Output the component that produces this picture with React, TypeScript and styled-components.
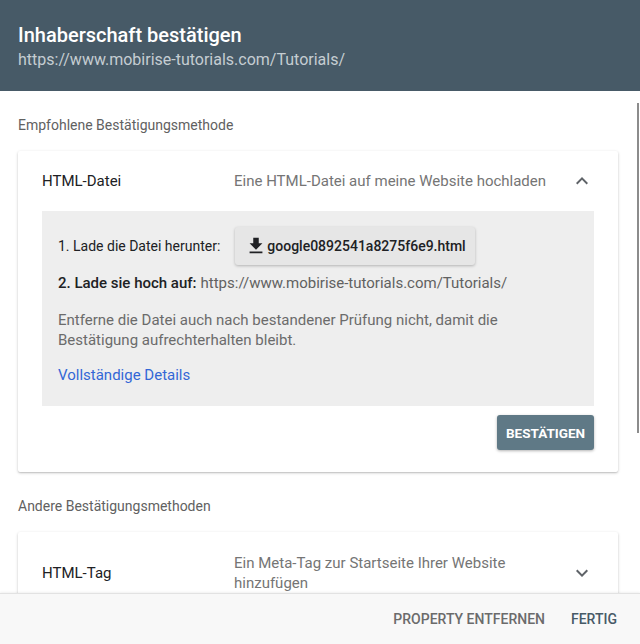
import React from 'react';
import styled, { createGlobalStyle } from 'styled-components';

const GlobalStyle = createGlobalStyle`
    html, body {
        margin: 0;
        padding: 0;
        background: #ffffff;
    }
    body {
        font-family: Roboto, 'Noto Sans', sans-serif;
        -webkit-font-smoothing: antialiased;
    }
`;

const ChevronIcon = ({ up }: { up?: boolean }) => (
    <svg width="24" height="24" viewBox="0 0 24 24">
        <path
            d={up ? 'M7.41 15.41 12 10.83l4.59 4.58L18 14l-6-6-6 6z' : 'M7.41 8.59 12 13.17l4.59-4.58L18 10l-6 6-6-6z'}
            fill="#5f6368"
        />
    </svg>
);

const DownloadIcon = () => (
    <svg width="22" height="22" viewBox="0 0 24 24">
        <path d="M19 9h-4V3H9v6H5l7 7 7-7zM5 18v2h14v-2H5z" fill="#202124" />
    </svg>
);

const App = () => {
    return (
        <>
            <GlobalStyle />
            <Dialog>
                <Header>
                    <Title>Inhaberschaft bestätigen</Title>
                    <SubTitle>https://www.mobirise-tutorials.com/Tutorials/</SubTitle>
                </Header>
                <Content>
                    <ScrollThumb />
                    <SectionLabel>Empfohlene Bestätigungsmethode</SectionLabel>
                    <Card>
                        <CardHead $tall={false}>
                            <MethodName>HTML-Datei</MethodName>
                            <MethodDesc>Eine HTML-Datei auf meine Website hochladen</MethodDesc>
                            <IconSlot>
                                <ChevronIcon up />
                            </IconSlot>
                        </CardHead>
                        <Instructions>
                            <StepRow>
                                <StepText>1. Lade die Datei herunter:</StepText>
                                <FileButton>
                                    <DownloadIcon />
                                    google0892541a8275f6e9.html
                                </FileButton>
                            </StepRow>
                            <StepRow>
                                <StepStrong>2. Lade sie hoch auf:</StepStrong>
                                <StepUrl>https://www.mobirise-tutorials.com/Tutorials/</StepUrl>
                            </StepRow>
                            <Note>
                                Entferne die Datei auch nach bestandener Prüfung nicht, damit die
                                <br />
                                Bestätigung aufrechterhalten bleibt.
                            </Note>
                            <DetailsLink href="#">Vollständige Details</DetailsLink>
                        </Instructions>
                        <CardActions>
                            <ConfirmButton>BESTÄTIGEN</ConfirmButton>
                        </CardActions>
                    </Card>
                    <SectionLabel>Andere Bestätigungsmethoden</SectionLabel>
                    <Card>
                        <CardHead $tall>
                            <MethodName>HTML-Tag</MethodName>
                            <MethodDesc>Ein Meta-Tag zur Startseite Ihrer Website hinzufügen</MethodDesc>
                            <IconSlot>
                                <ChevronIcon />
                            </IconSlot>
                        </CardHead>
                    </Card>
                </Content>
                <Footer>
                    <TextButton $primary={false}>PROPERTY ENTFERNEN</TextButton>
                    <TextButton $primary>FERTIG</TextButton>
                </Footer>
            </Dialog>
        </>
    );
};

const Dialog = styled.div`
    width: 640px;
    height: 644px;
    display: flex;
    flex-direction: column;
    overflow: hidden;
    background: #ffffff;
`;

const Header = styled.header`
    height: 91px;
    box-sizing: border-box;
    background-color: #475a67;
    padding: 22px 18px 0;
    flex-shrink: 0;
`;

const Title = styled.h1`
    margin: 0;
    font-size: 20px;
    line-height: 26px;
    font-weight: 500;
    color: #ffffff;
`;

const SubTitle = styled.div`
    margin-top: 2px;
    font-size: 16px;
    line-height: 20px;
    color: #c5cdd2;
`;

const Content = styled.main`
    position: relative;
    flex: 1;
    overflow: hidden;
    padding: 0 22px 0 18px;
`;

const ScrollThumb = styled.div`
    position: absolute;
    right: 1px;
    top: 12px;
    width: 2px;
    height: 330px;
    background: #8c8c8c;
`;

const SectionLabel = styled.div`
    padding: 24px 0 16px;
    font-size: 14px;
    line-height: 20px;
    color: #616161;
`;

const Card = styled.section`
    background: #ffffff;
    border-radius: 2px;
    box-shadow: 0 1px 3px rgba(0, 0, 0, 0.22), 0 1px 1px rgba(0, 0, 0, 0.08);
    padding: 0 24px 22px;
`;

const CardHead = styled.div<{ $tall: boolean }>`
    display: flex;
    align-items: center;
    box-sizing: border-box;
    min-height: 60px;
    padding: ${(p) => (p.$tall ? '21px 0 19px' : '0')};
`;

const MethodName = styled.div`
    width: 192px;
    flex-shrink: 0;
    font-size: 15px;
    color: #202124;
`;

const MethodDesc = styled.div`
    width: 322px;
    font-size: 15px;
    line-height: 20px;
    color: #757575;
`;

const IconSlot = styled.div`
    margin-left: auto;
    display: flex;
    align-items: center;
`;

const Instructions = styled.div`
    background: #eeeeee;
    padding: 15px 16px 21px;
    display: flex;
    flex-direction: column;
`;

const StepRow = styled.div`
    display: flex;
    align-items: center;
    gap: 4px;
    min-height: 39px;
    & + & {
        min-height: 36px;
    }
`;

const StepText = styled.span`
    font-size: 14px;
    color: #202124;
    margin-right: 11px;
`;

const StepStrong = styled.span`
    font-size: 15px;
    font-weight: 500;
    color: #202124;
`;

const StepUrl = styled.span`
    font-size: 15px;
    color: #616161;
`;

const FileButton = styled.button`
    display: flex;
    align-items: center;
    gap: 0;
    height: 38px;
    padding: 0 9px 0 10px;
    border: none;
    border-radius: 3px;
    background: #e6e6e6;
    box-shadow: 0 1px 3px rgba(0, 0, 0, 0.25);
    font-family: inherit;
    font-size: 14px;
    font-weight: 500;
    color: #202124;
`;

const Note = styled.p`
    margin: 9px 0 0;
    font-size: 15px;
    line-height: 20px;
    color: #6b6b6b;
`;

const DetailsLink = styled.a`
    margin-top: 15px;
    font-size: 15px;
    line-height: 20px;
    color: #3367d6;
    text-decoration: none;
`;

const CardActions = styled.div`
    display: flex;
    justify-content: flex-end;
    padding-top: 9px;
`;

const ConfirmButton = styled.button`
    width: 97px;
    height: 35px;
    border: none;
    border-radius: 3px;
    background: #5f7986;
    box-shadow: 0 1px 3px rgba(0, 0, 0, 0.3);
    color: #ffffff;
    font-family: inherit;
    font-size: 13.5px;
    font-weight: 700;
`;

const Footer = styled.footer`
    height: 50px;
    flex-shrink: 0;
    display: flex;
    align-items: center;
    justify-content: flex-end;
    gap: 26px;
    padding-right: 23px;
    background: #f8f8f8;
    border-top: 1px solid #e2e2e2;
    box-shadow: 0 -1px 2px rgba(0, 0, 0, 0.06);
    position: relative;
`;

const TextButton = styled.button<{ $primary: boolean }>`
    border: none;
    background: none;
    padding: 0;
    font-family: inherit;
    font-size: 14px;
    font-weight: 500;
    color: ${(p) => (p.$primary ? '#475a67' : '#6b6b6b')};
`;

export default App;
